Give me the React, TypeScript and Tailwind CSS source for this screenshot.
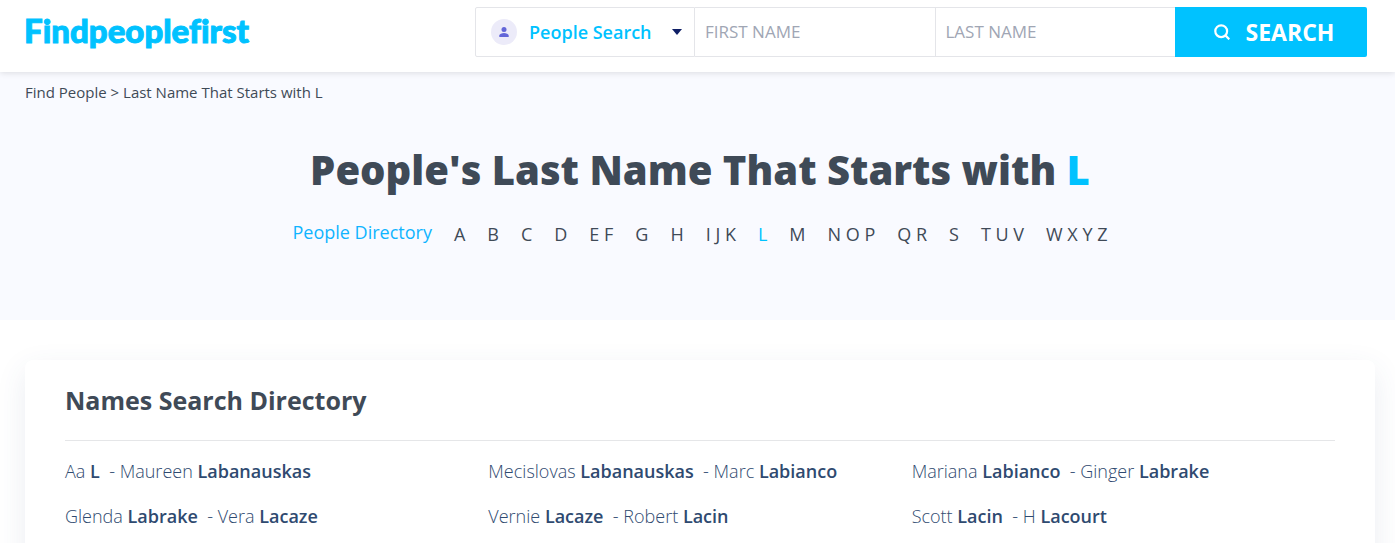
import { useState } from 'react'

const letterGroups = ['A', 'B', 'C', 'D', 'E F', 'G', 'H', 'I J K', 'L', 'M', 'N O P', 'Q R', 'S', 'T U V', 'W X Y Z']

const nameRanges = [
  { from: ['Aa', 'L'], to: ['Maureen', 'Labanauskas'] },
  { from: ['Mecislovas', 'Labanauskas'], to: ['Marc', 'Labianco'] },
  { from: ['Mariana', 'Labianco'], to: ['Ginger', 'Labrake'] },
  { from: ['Glenda', 'Labrake'], to: ['Vera', 'Lacaze'] },
  { from: ['Vernie', 'Lacaze'], to: ['Robert', 'Lacin'] },
  { from: ['Scott', 'Lacin'], to: ['H', 'Lacourt'] },
]

function SearchForm() {
  const [firstName, setFirstName] = useState('')
  const [lastName, setLastName] = useState('')

  return (
    <form className="flex h-[50px] w-full max-w-[892px]" onSubmit={(e) => e.preventDefault()}>
      <div className="relative w-[220px] shrink-0">
        <select
          aria-label="Search type"
          className="h-full w-full appearance-none rounded-l-xs border border-[#e4e5e9] bg-white pl-[53px] text-lg font-semibold text-[#00c2ff] outline-none"
        >
          <option>People Search</option>
        </select>
        <span className="pointer-events-none absolute top-3 left-4 flex size-[26px] items-center justify-center rounded-full bg-[#ecebf9]">
          <svg viewBox="0 0 10 10" className="size-[10px]" fill="#6366d8">
            <circle cx="5" cy="2.6" r="2.5" />
            <path d="M0.3 10V8.6C0.3 7 3 6.1 5 6.1s4.7.9 4.7 2.5V10z" />
          </svg>
        </span>
        <svg viewBox="0 0 10 6" className="pointer-events-none absolute top-[22px] right-[13px] h-[6px] w-[10px]" fill="#0f1f66">
          <path d="M0 0h10L5 6z" />
        </svg>
      </div>
      <input
        type="text"
        aria-label="First name"
        placeholder="FIRST NAME"
        value={firstName}
        onChange={(e) => setFirstName(e.target.value)}
        className="min-w-0 flex-1 border-y border-r border-[#e4e5e9] bg-white px-[10px] text-[17px] text-[#3f4a57] outline-none placeholder:text-[#a0a6b4]"
      />
      <input
        type="text"
        aria-label="Last name"
        placeholder="LAST NAME"
        value={lastName}
        onChange={(e) => setLastName(e.target.value)}
        className="min-w-0 flex-1 border-y border-[#e4e5e9] bg-white px-[10px] text-[17px] text-[#3f4a57] outline-none placeholder:text-[#a0a6b4]"
      />
      <button
        type="submit"
        className="flex w-48 shrink-0 items-center justify-center gap-4 rounded-r-xs bg-[#00c2ff] pl-1.5 text-[23px] font-bold text-white"
      >
        <svg viewBox="0 0 16 16" className="size-4" fill="none" stroke="currentColor" strokeWidth="2.2">
          <circle cx="7.2" cy="7.2" r="5.9" />
          <path d="M11.4 11.4L15.3 15.3" />
        </svg>
        SEARCH
      </button>
    </form>
  )
}

export default function App() {
  return (
    <div className="bg-white font-['Open_Sans',sans-serif] text-[#3f4a57]">
      <header className="relative flex h-[72px] items-start justify-between gap-8 bg-white pt-[7px] pr-7 pl-6 shadow-[0_1px_6px_rgba(0,0,0,0.12)]">
        <a
          href="/"
          className="font-['Lato',sans-serif] text-[33px] leading-[46px] font-black text-[#00c2ff] [-webkit-text-stroke:1px_#00c2ff] [font-variant-ligatures:none]"
        >
          Findpeoplefirst
        </a>
        <SearchForm />
      </header>

      <section className="bg-[#f9faff] pt-[10px] pr-5 pb-[69px] pl-[25px]">
        <nav aria-label="Breadcrumb" className="text-[15px] leading-5">
          <a href="/find-people">Find People</a> &gt; <span>Last Name That Starts with L</span>
        </nav>
        <h1 className="mt-10 text-center text-[40px] leading-14 font-extrabold">
          People's Last Name That Starts with <span className="text-[#00c2ff]">L</span>
        </h1>
        <nav aria-label="People directory" className="mt-[19px] flex items-center justify-center gap-[22px] text-lg leading-[30px]">
          <a href="/people" className="pb-1 font-medium text-[#0fb4ff]">People Directory</a>
          {letterGroups.map((group) => (
            <a key={group} href={'/people/' + group[0]} className={group === 'L' ? 'text-[#00c2ff]' : ''}>
              {group}
            </a>
          ))}
        </nav>
      </section>

      <main className="pt-10 pr-5 pl-[25px]">
        <div className="rounded-lg bg-white px-10 pt-6 pb-10 shadow-[0_10px_30px_rgba(60,80,130,0.1)]">
          <h2 className="border-b border-[#e5e6e8] pb-6 text-[25px] leading-8 font-bold">Names Search Directory</h2>
          <ul className="mt-2 grid grid-cols-3">
            {nameRanges.map(({ from, to }) => (
              <li key={from.join(' ')} className="h-[45px] text-lg leading-[45px] font-light text-[#2f4a70]">
                <a href={'/people/' + from.join('-')}>
                  {from[0]} <b className="font-semibold">{from[1]}</b>&nbsp; - {to[0]} <b className="font-semibold">{to[1]}</b>
                </a>
              </li>
            ))}
          </ul>
        </div>
      </main>
    </div>
  )
}
